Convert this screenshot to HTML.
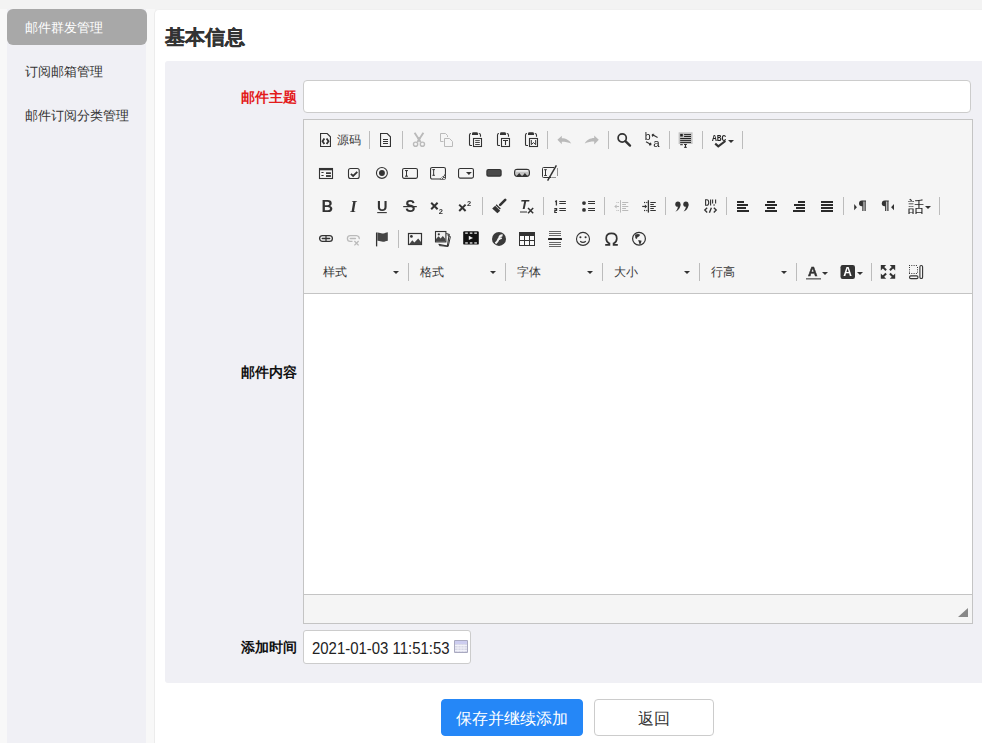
<!DOCTYPE html>
<html><head><meta charset="utf-8">
<style>
*{box-sizing:border-box}
html,body{margin:0;padding:0;width:982px;height:743px;overflow:hidden;background:#f3f3f3;font-family:"Liberation Sans",sans-serif}
.abs{position:absolute}
#leftstrip{position:absolute;left:0;top:9px;width:155px;height:734px;background:#f8f8f8}
#side{position:absolute;left:7px;top:9px;width:139px;height:734px;background:#f0f0f5}
#pill{position:absolute;left:7px;top:9px;width:140px;height:36px;background:#a8a8a8;border-radius:6px}
.nav{position:absolute;left:25px;font-size:13px;line-height:18px;color:#333;white-space:nowrap}
#main{position:absolute;left:154px;top:9px;width:840px;height:740px;background:#fff;border-radius:5px 0 0 0;border-left:1px solid #ececec;border-top:1px solid #f0f0f0}
#title{position:absolute;left:165px;top:25px;font-size:20px;font-weight:bold;color:#333;-webkit-text-stroke:0.35px #333;line-height:24px;white-space:nowrap}
#form{position:absolute;left:165px;top:61px;width:830px;height:622px;background:#f0f0f5;border-radius:3px}
.label{position:absolute;width:120px;left:177px;text-align:right;font-size:14px;font-weight:bold;line-height:20px;color:#111;white-space:nowrap}
#subject{position:absolute;left:303px;top:80px;width:668px;height:33px;background:#fff;border:1px solid #ccc;border-radius:4px}
#cke{position:absolute;left:303px;top:119px;width:670px;height:505px;border:1px solid #c4c4c4;background:#fff}
#ctop{position:absolute;left:0;top:0;width:668px;height:174px;background:#f5f5f5;border-bottom:1px solid #c4c4c4}
#cbot{position:absolute;left:0;top:474px;width:668px;height:29px;background:#f5f5f5;border-top:1px solid #c4c4c4}
#resz{position:absolute;left:654px;top:13px;width:0;height:0;border-style:solid;border-width:0 0 9px 10px;border-color:transparent transparent #888 transparent}
.ic{position:absolute;overflow:visible;will-change:transform}
.sep{position:absolute;width:1px;height:18px;background:#bcbcbc}
.arr{position:absolute;width:0;height:0;border-left:3px solid transparent;border-right:3px solid transparent;border-top:3px solid #333}
.lbl{position:absolute;font-size:12px;line-height:17px;color:#3c3c3c;white-space:nowrap}
.ctext{position:absolute;font-size:12px;line-height:26px;color:#383838;white-space:nowrap}
#date{position:absolute;left:303px;top:630px;width:168px;height:34px;background:#fff;border:1px solid #ccc;border-radius:3px}
#datetxt{position:absolute;left:312px;top:638px;font-size:16.5px;line-height:20px;color:#222;white-space:nowrap;transform:scaleX(0.905);transform-origin:0 0}
.btn{position:absolute;top:699px;height:37px;border-radius:4px;font-size:16px;line-height:37px;text-align:center;white-space:nowrap}
</style></head><body>
<div id="leftstrip"></div>
<div id="side"></div>
<div id="pill"></div>
<div class="nav" style="top:19px;color:#fff">邮件群发管理</div>
<div class="nav" style="top:63px">订阅邮箱管理</div>
<div class="nav" style="top:107px">邮件订阅分类管理</div>
<div id="main"></div>
<div id="title">基本信息</div>
<div id="form"></div>
<div class="label" style="top:87px;color:#e31b1b">邮件主题</div>
<div id="subject"></div>
<div class="label" style="top:362px">邮件内容</div>
<div id="cke"><div id="ctop"></div><div id="cbot"><div id="resz"></div></div></div>
<svg class="ic" style="left:318px;top:132px;width:16px;height:16px" viewBox="0 0 16 16" ><path d="M2.55,1.55 H9.2 L12.45,4.8 V14.45 H2.55 Z" stroke="#333" fill="none" stroke-width="1.1"/><path d="M6.4,6.6 L4.5,9.3 L6.4,12 M8.6,6.6 L10.5,9.3 L8.6,12" stroke="#333" fill="none" stroke-width="1.8"/></svg>
<span class="lbl" style="left:337px;top:132px">源码</span>
<i class="sep" style="left:369px;top:131px"></i>
<svg class="ic" style="left:378px;top:132px;width:16px;height:16px" viewBox="0 0 16 16" ><path d="M2.55,1.55 H9.2 L12.45,4.8 V14.45 H2.55 Z" stroke="#333" fill="none" stroke-width="1.1"/><path d="M5,7.5 H10 M5,9.5 H10 M5,11.5 H10" stroke="#333" fill="none" stroke-width="1"/></svg>
<i class="sep" style="left:402px;top:131px"></i>
<svg class="ic" style="left:411px;top:132px;width:16px;height:16px;opacity:0.3" viewBox="0 0 16 16" ><path d="M3.6,0.8 L9.6,10 M12.4,0.8 L6.4,10" stroke="#333" fill="none" stroke-width="1.9"/><circle cx="4.6" cy="12.2" r="2.1" stroke="#333" fill="none" stroke-width="1.4"/><circle cx="11.4" cy="12.2" r="2.1" stroke="#333" fill="none" stroke-width="1.4"/><circle cx="8" cy="6.6" r="1.5" fill="#333"/></svg>
<svg class="ic" style="left:439px;top:132px;width:16px;height:16px;opacity:0.3" viewBox="0 0 16 16" ><path d="M4.5,9.5 H1.5 V1.5 H6.5 L8.5,3.5 V5" stroke="#333" fill="none" stroke-width="1"/><path d="M5.5,6.5 H10.5 L13.5,9.5 V14.5 H5.5 Z" stroke="#333" fill="none" stroke-width="1"/></svg>
<svg class="ic" style="left:467px;top:132px;width:16px;height:16px" viewBox="0 0 16 16" ><path d="M4,1.5 Q2.5,1.5 2.5,3 V12.5 Q2.5,13.5 3.5,13.5 H5" stroke="#333" fill="none" stroke-width="1.1"/><path d="M11.8,1.5 Q13.5,1.5 13.5,3 V4.8" stroke="#333" fill="none" stroke-width="1.1"/><path d="M5,3 V1.6 Q5,0.3 6.4,0.3 H9.6 Q11,0.3 11,1.6 V3 Z" fill="#333"/><rect x="6.5" y="6.5" width="8" height="8" fill="#f8f8f8" stroke="#333" stroke-width="1.1"/><path d="M8.2,8.6 H12.8 M8.2,10.5 H12.8 M8.2,12.5 H12.8" stroke="#333" fill="none" stroke-width="0.9"/></svg>
<svg class="ic" style="left:495px;top:132px;width:16px;height:16px" viewBox="0 0 16 16" ><path d="M4,1.5 Q2.5,1.5 2.5,3 V12.5 Q2.5,13.5 3.5,13.5 H5" stroke="#333" fill="none" stroke-width="1.1"/><path d="M11.8,1.5 Q13.5,1.5 13.5,3 V4.8" stroke="#333" fill="none" stroke-width="1.1"/><path d="M5,3 V1.6 Q5,0.3 6.4,0.3 H9.6 Q11,0.3 11,1.6 V3 Z" fill="#333"/><rect x="6.5" y="6.5" width="8" height="8" fill="#f8f8f8" stroke="#333" stroke-width="1.1"/><path d="M8,8.5 H13 M10.5,8.5 V13" stroke="#333" fill="none" stroke-width="1.1"/></svg>
<svg class="ic" style="left:523px;top:132px;width:16px;height:16px" viewBox="0 0 16 16" ><path d="M4,1.5 Q2.5,1.5 2.5,3 V12.5 Q2.5,13.5 3.5,13.5 H5" stroke="#333" fill="none" stroke-width="1.1"/><path d="M11.8,1.5 Q13.5,1.5 13.5,3 V4.8" stroke="#333" fill="none" stroke-width="1.1"/><path d="M5,3 V1.6 Q5,0.3 6.4,0.3 H9.6 Q11,0.3 11,1.6 V3 Z" fill="#333"/><rect x="6.5" y="6.5" width="8" height="8" fill="#f8f8f8" stroke="#333" stroke-width="1.1"/><path d="M8.3,8 V12.7 L10.5,10.6 L12.7,12.7 V8" stroke="#333" fill="none" stroke-width="1"/></svg>
<i class="sep" style="left:547px;top:131px"></i>
<svg class="ic" style="left:556px;top:132px;width:16px;height:16px;opacity:0.3" viewBox="0 0 16 16" ><path d="M1.4,7.8 L5.8,3.8 V6.2 C9.8,6.2 13.8,8.2 15.2,11.6 C12.2,10.2 9.2,9.8 5.8,9.8 V12.2 Z" fill="#333"/></svg>
<svg class="ic" style="left:584px;top:132px;width:16px;height:16px;opacity:0.3" viewBox="0 0 16 16" ><path d="M14.8,7.8 L10.2,3.4 V6 C6.2,6 2.2,8.2 0.8,11.4 C3.8,10 6.8,9.6 10.2,9.6 V12.4 Z" fill="#333"/></svg>
<i class="sep" style="left:608px;top:131px"></i>
<svg class="ic" style="left:617px;top:132px;width:16px;height:16px" viewBox="0 0 16 16" ><circle cx="5.2" cy="6" r="4.1" stroke="#333" fill="none" stroke-width="1.7"/><path d="M8.4,9.2 L13,13.6" stroke="#333" fill="none" stroke-width="2.4" stroke-linecap="round"/></svg>
<svg class="ic" style="left:645px;top:132px;width:16px;height:16px" viewBox="0 0 16 16" ><text x="-0.3" y="8.4" font-family="Liberation Sans" font-size="10.5" fill="#222">b</text><text x="8.2" y="15.2" font-family="Liberation Sans" font-size="11.5" fill="#222">a</text><path d="M7.2,2.6 L12.6,5.6 M7,2.5 L9.2,2.3 M7,2.6 L7.8,4.6" stroke="#333" fill="none" stroke-width="1.1"/><path d="M1,9.8 L6,12.6 M6.2,12.6 L4,12.9 M6.2,12.6 L5.4,10.8" stroke="#333" fill="none" stroke-width="1.1"/></svg>
<i class="sep" style="left:669px;top:131px"></i>
<svg class="ic" style="left:678px;top:132px;width:16px;height:16px" viewBox="0 0 16 16" ><rect x="0.6" y="0.3" width="14" height="11.7" fill="#c4c4c4"/><rect x="2.2" y="1.9" width="2.6" height="2.6" fill="#222"/><path d="M6.1,2.6 H13 M6.1,4.5 H13 M2.2,6.5 H13 M2.2,8.4 H13 M2.2,10.4 H13 M2.2,12.7 H4.8" stroke="#222" stroke-width="1"/><path d="M6.1,12.5 H8.8 M7.45,12.5 V15.3 M6.1,15.3 H8.8" stroke="#222" stroke-width="1"/></svg>
<i class="sep" style="left:702px;top:131px"></i>
<svg class="ic" style="left:711px;top:132px;width:16px;height:16px" viewBox="0 0 16 16" ><text x="0.9" y="8.6" font-family="Liberation Mono" font-weight="bold" font-size="9" textLength="14.3" lengthAdjust="spacingAndGlyphs" fill="#222">ABC</text><path d="M4.2,11.6 L7.3,14.4 L14.4,9" stroke="#333" fill="none" stroke-width="2.1"/></svg>
<i class="arr" style="left:728px;top:140px"></i>
<i class="sep" style="left:742px;top:131px"></i>
<svg class="ic" style="left:318px;top:165px;width:16px;height:16px" viewBox="0 0 16 16" ><rect x="1.5" y="3.5" width="13" height="10" stroke="#333" fill="none" stroke-width="1.1"/><rect x="1" y="3" width="14" height="2.3" fill="#333"/><path d="M3.4,7.5 H5.6 M3.4,10.5 H5.6" stroke="#333" fill="none" stroke-width="1"/><rect x="8" y="7.3" width="4.9" height="1.7" fill="#333"/><rect x="8" y="10.1" width="4.9" height="1.8" fill="#333"/></svg>
<svg class="ic" style="left:346px;top:165px;width:16px;height:16px" viewBox="0 0 16 16" ><rect x="2.5" y="3.5" width="10.7" height="10" rx="2" stroke="#333" fill="none" stroke-width="1.1"/><path d="M4.9,8.9 L7.1,11 L11.3,6.8" stroke="#333" fill="none" stroke-width="1.8"/></svg>
<svg class="ic" style="left:374px;top:165px;width:16px;height:16px" viewBox="0 0 16 16" ><circle cx="7.9" cy="7.9" r="5.45" stroke="#333" fill="none" stroke-width="1.1"/><circle cx="7.95" cy="7.95" r="2.95" fill="#333"/></svg>
<svg class="ic" style="left:402px;top:165px;width:16px;height:16px" viewBox="0 0 16 16" ><rect x="0.55" y="3.5" width="14.9" height="9.9" rx="1.6" stroke="#333" fill="none" stroke-width="1.1"/><path d="M3,5.6 H6 M4.5,5.6 V11.2 M3,11.2 H6" stroke="#333" fill="none" stroke-width="1"/></svg>
<svg class="ic" style="left:430px;top:165px;width:16px;height:16px" viewBox="0 0 16 16" ><rect x="0.55" y="2.45" width="14.9" height="11.6" rx="1.6" stroke="#333" fill="none" stroke-width="1.1"/><path d="M2.4,4.6 H4.9 M3.65,4.6 V10.3 M2.4,10.3 H4.9" stroke="#333" fill="none" stroke-width="1"/><path d="M9.6,14.4 L15.4,8.6 V14.4 Z" fill="#555"/><path d="M11,13.5 h1 M13,13.5 h1 M12,12.5 h1 M14,11.5 h1 M13,11.5 h0 M14,13.5 h1 M13,10.5 h1" stroke="#eee" stroke-width="0.9"/></svg>
<svg class="ic" style="left:458px;top:165px;width:16px;height:16px" viewBox="0 0 16 16" ><rect x="0.55" y="3.45" width="14.9" height="9.7" rx="1.6" stroke="#333" fill="none" stroke-width="1.1"/><path d="M8,7 H13.8 L10.9,10.1 Z" fill="#333"/></svg>
<svg class="ic" style="left:486px;top:165px;width:16px;height:16px" viewBox="0 0 16 16" ><rect x="0.3" y="3.9" width="15.4" height="7.8" rx="2" fill="#333"/><rect x="1.5" y="5" width="13" height="5.6" rx="1" fill="#4a4a4a"/></svg>
<svg class="ic" style="left:514px;top:165px;width:16px;height:16px" viewBox="0 0 16 16" ><rect x="0.55" y="4.4" width="14.9" height="7" rx="2.8" fill="#c4c4c4" stroke="#333" stroke-width="1.1"/><rect x="1.6" y="5.3" width="12.8" height="1.2" fill="#fff"/><path d="M1.2,10.9 L2.6,10.9 L5.2,8 L7.8,10.9 L8.4,10.9 L10.9,8 L13.4,10.9 L14.8,10.9 V11 H1.2 Z" fill="#333"/></svg>
<svg class="ic" style="left:542px;top:165px;width:16px;height:16px" viewBox="0 0 16 16" ><path d="M9.4,12.5 H1.5 Q0.5,12.5 0.5,11.5 V3.5 Q0.5,2.5 1.5,2.5 H12" stroke="#333" fill="none" stroke-width="1"/><path d="M2.2,4.7 H4.8 M3.5,4.7 V10.5 M2.2,10.5 H4.8" stroke="#333" fill="none" stroke-width="1"/><path d="M14.4,0.3 L5.6,15.6" stroke="#333" fill="none" stroke-width="1.5"/><path d="M15.5,3.5 V11.5 M10.5,12.5 H14.5" stroke="#333" stroke-width="1" stroke-dasharray="1 1"/></svg>
<svg class="ic" style="left:318px;top:198px;width:16px;height:16px" viewBox="0 0 16 16" ><text x="3.4" y="14" font-family="Liberation Sans" font-weight="bold" font-style="normal" font-size="16" fill="#333" >B</text></svg>
<svg class="ic" style="left:346px;top:198px;width:16px;height:16px" viewBox="0 0 16 16" ><text x="4.2" y="14" font-family="Liberation Serif" font-weight="bold" font-style="italic" font-size="16.5" fill="#333" >I</text></svg>
<svg class="ic" style="left:374px;top:198px;width:16px;height:16px" viewBox="0 0 16 16" ><text x="3" y="12.6" font-family="Liberation Sans" font-weight="bold" font-style="normal" font-size="14.5" fill="#333" >U</text><path d="M3.2,14.6 H12.8" stroke="#333" fill="none" stroke-width="1.1"/></svg>
<svg class="ic" style="left:402px;top:198px;width:16px;height:16px" viewBox="0 0 16 16" ><text x="3.6" y="14" font-family="Liberation Sans" font-weight="bold" font-style="normal" font-size="16.5" fill="#333" transform="scale(0.92,1)">S</text><path d="M1.2,8.6 H14.8" stroke="#333" fill="none" stroke-width="1.2"/></svg>
<svg class="ic" style="left:430px;top:198px;width:16px;height:16px" viewBox="0 0 16 16" ><path d="M1.2,4.8 L7.6,11.2 M7.6,4.8 L1.2,11.2" stroke="#333" fill="none" stroke-width="2"/><text x="8.8" y="15.6" font-family="Liberation Sans" font-weight="bold" font-style="normal" font-size="7.5" fill="#333" >2</text></svg>
<svg class="ic" style="left:458px;top:198px;width:16px;height:16px" viewBox="0 0 16 16" ><path d="M1.2,6.6 L7.6,13 M7.6,6.6 L1.2,13" stroke="#333" fill="none" stroke-width="2"/><text x="9" y="7.6" font-family="Liberation Sans" font-weight="bold" font-style="normal" font-size="7.5" fill="#333" >2</text></svg>
<i class="sep" style="left:482px;top:197px"></i>
<svg class="ic" style="left:491px;top:198px;width:16px;height:16px" viewBox="0 0 16 16" ><path d="M14.2,1.8 L9.2,6.8" stroke="#333" fill="none" stroke-width="2.6" stroke-linecap="round"/><path d="M5.6,6.2 L9.8,10.4 L8.8,11.4 L4.6,7.2 Z" fill="#333"/><path d="M4.2,7.8 L9.2,12.8 L6.4,15.2 L1.2,10.4 Z" fill="#333"/></svg>
<svg class="ic" style="left:519px;top:198px;width:16px;height:16px" viewBox="0 0 16 16" ><text x="1.2" y="11.4" font-family="Liberation Sans" font-weight="bold" font-style="italic" font-size="13.5" fill="#333" >T</text><path d="M1,14 H8" stroke="#333" fill="none" stroke-width="1"/><path d="M9,10 L14.2,15.2 M14.2,10 L9,15.2" stroke="#333" fill="none" stroke-width="1.5"/></svg>
<i class="sep" style="left:543px;top:197px"></i>
<svg class="ic" style="left:552px;top:198px;width:16px;height:16px" viewBox="0 0 16 16" ><path d="M3.1,3.6 L4.4,3 V7.6" stroke="#333" fill="none" stroke-width="1.3"/><path d="M2.3,10.6 H4.6 V12.3 H2.8 V14.5 H5" stroke="#333" fill="none" stroke-width="1.2"/><path d="M7.3,3.5 H13.9 M7.3,5.5 H13.9 M7.3,10.5 H13.9 M7.3,12.5 H13.9" stroke="#333" fill="none" stroke-width="1"/></svg>
<svg class="ic" style="left:580px;top:198px;width:16px;height:16px" viewBox="0 0 16 16" ><circle cx="4" cy="5.1" r="1.9" fill="#333"/><circle cx="4" cy="11.9" r="1.9" fill="#333"/><path d="M8.1,3.5 H15 M8.1,5.5 H15 M8.1,10.5 H15 M8.1,12.5 H15" stroke="#333" fill="none" stroke-width="1"/></svg>
<i class="sep" style="left:604px;top:197px"></i>
<svg class="ic" style="left:613px;top:198px;width:16px;height:16px;opacity:0.3" viewBox="0 0 16 16" ><path d="M7.5,2.2 V14.6" stroke="#333" fill="none" stroke-width="1"/><path d="M9.2,4.5 H15.3 M9.2,6.5 H13 M9.2,8.5 H15.3 M9.2,10.5 H13 M9.2,12.5 H15.3" stroke="#333" fill="none" stroke-width="1"/><path d="M1.2,8.4 L3.6,6.4 V10.4 Z" fill="#333"/><path d="M3.4,8.5 H6 M3.4,4.5 H4.4 M5.2,4.5 H6 M3.4,12.5 H4.4 M5.2,12.5 H6" stroke="#333" fill="none" stroke-width="1"/></svg>
<svg class="ic" style="left:641px;top:198px;width:16px;height:16px" viewBox="0 0 16 16" ><path d="M7.4,2.2 V14.6" stroke="#333" fill="none" stroke-width="1.3"/><path d="M9.3,4.5 H14.8 M9.3,6.5 H12.8 M9.3,8.5 H14.8 M9.3,10.5 H12.8 M9.3,12.5 H14.8" stroke="#333" fill="none" stroke-width="1.1"/><path d="M6.2,8.45 L3.9,6.5 V10.4 Z" fill="#333"/><path d="M1.2,8.45 H4.4" stroke="#333" fill="none" stroke-width="1.2"/><rect x="3" y="3.9" width="1.2" height="1.2" fill="#333"/><rect x="5.2" y="3.9" width="1.2" height="1.2" fill="#333"/><rect x="3" y="11.9" width="1.2" height="1.2" fill="#333"/><rect x="5.2" y="11.9" width="1.2" height="1.2" fill="#333"/></svg>
<i class="sep" style="left:665px;top:197px"></i>
<svg class="ic" style="left:674px;top:198px;width:16px;height:16px" viewBox="0 0 16 16" ><circle cx="3.9" cy="6.2" r="2.6" fill="#333"/><path d="M6.5,6.3 C6.6,9.8 4.6,12.6 1.4,13.8 C3,12 3.8,10.5 3.9,8.6 Z" fill="#333"/><circle cx="11.9" cy="6.2" r="2.6" fill="#333"/><path d="M14.5,6.3 C14.6,9.8 12.6,12.6 9.6,13.6 C11,12 11.8,10.5 11.9,8.6 Z" fill="#333"/></svg>
<svg class="ic" style="left:702px;top:198px;width:16px;height:16px" viewBox="0 0 16 16" ><path d="M3.6,1.7 H4.9 Q6.7,1.7 6.7,4.5 Q6.7,7.3 4.9,7.3 H3.6 Z" stroke="#333" fill="none" stroke-width="1.1"/><path d="M8.6,1.6 V7.4 M10.6,1.6 V5.6 M13.6,1.6 V5.6" stroke="#333" fill="none" stroke-width="1.1"/><rect x="11.4" y="6.4" width="1.4" height="1.2" fill="#333"/><path d="M5.2,9.8 L2.8,12.1 L5.2,14.4 M11.8,9.8 L14.2,12.1 L11.8,14.4 M9.4,9.8 L7.4,14.8" stroke="#333" fill="none" stroke-width="1.35"/></svg>
<i class="sep" style="left:726px;top:197px"></i>
<svg class="ic" style="left:735px;top:198px;width:16px;height:16px" viewBox="0 0 16 16" ><rect x="2" y="3" width="7" height="2" fill="#2a2a2a"/><rect x="2" y="6" width="11" height="2" fill="#2a2a2a"/><rect x="2" y="9" width="9" height="2" fill="#2a2a2a"/><rect x="2" y="12" width="12" height="2" fill="#2a2a2a"/></svg>
<svg class="ic" style="left:763px;top:198px;width:16px;height:16px" viewBox="0 0 16 16" ><rect x="4" y="3" width="8" height="2" fill="#2a2a2a"/><rect x="2" y="6" width="12" height="2" fill="#2a2a2a"/><rect x="4" y="9" width="8" height="2" fill="#2a2a2a"/><rect x="2" y="12" width="12" height="2" fill="#2a2a2a"/></svg>
<svg class="ic" style="left:791px;top:198px;width:16px;height:16px" viewBox="0 0 16 16" ><rect x="7" y="3" width="7" height="2" fill="#2a2a2a"/><rect x="3" y="6" width="11" height="2" fill="#2a2a2a"/><rect x="5" y="9" width="9" height="2" fill="#2a2a2a"/><rect x="2" y="12" width="12" height="2" fill="#2a2a2a"/></svg>
<svg class="ic" style="left:819px;top:198px;width:16px;height:16px" viewBox="0 0 16 16" ><rect x="2" y="3" width="12" height="2" fill="#2a2a2a"/><rect x="2" y="6" width="12" height="2" fill="#2a2a2a"/><rect x="2" y="9" width="12" height="2" fill="#2a2a2a"/><rect x="2" y="12" width="12" height="2" fill="#2a2a2a"/></svg>
<i class="sep" style="left:843px;top:197px"></i>
<svg class="ic" style="left:852px;top:198px;width:16px;height:16px" viewBox="0 0 16 16" ><path d="M2.2,6.1 L4.9,9.2 L2.2,12.2 Z" fill="#333"/><path d="M10.6,3 H14 M10.9,3.2 V12.9 M13.1,3.2 V12.9" stroke="#333" fill="none" stroke-width="1.2"/><path d="M10.9,2.6 H9.8 Q7,2.8 7,5.5 Q7,8.2 9.8,8.3 H10.9 Z" fill="#333"/></svg>
<svg class="ic" style="left:880px;top:198px;width:16px;height:16px" viewBox="0 0 16 16" ><path d="M5.4,3 H8.8 M5.7,3.2 V12.9 M7.8999999999999995,3.2 V12.9" stroke="#333" fill="none" stroke-width="1.2"/><path d="M5.7,2.6 H4.6 Q1.8,2.8 1.8,5.5 Q1.8,8.2 4.6,8.3 H5.7 Z" fill="#333"/><path d="M14,6.1 L11.1,9.2 L14,12.2 Z" fill="#333"/></svg>
<svg class="ic" style="left:908px;top:198px;width:16px;height:16px" viewBox="0 0 16 16" ><text x="-0.5" y="14.2" font-size="15.5" fill="#222" font-family="Liberation Sans">話</text></svg>
<i class="arr" style="left:925px;top:206px"></i>
<i class="sep" style="left:939px;top:197px"></i>
<svg class="ic" style="left:318px;top:231px;width:16px;height:16px" viewBox="0 0 16 16" ><rect x="1.6" y="4.6" width="12.8" height="5.8" rx="2.9" stroke="#333" fill="none" stroke-width="1.3"/><rect x="3.6" y="6.8" width="8.8" height="1.4" rx="0.7" fill="#333"/><rect x="7.4" y="4.6" width="1.2" height="5.8" fill="#333"/></svg>
<svg class="ic" style="left:346px;top:231px;width:16px;height:16px;opacity:0.3" viewBox="0 0 16 16" ><path d="M6.5,10.4 H4.3 A2.9,2.9 0 0 1 4.3,4.6 H10.5 A2.9,2.9 0 0 1 13.2,8.2" stroke="#333" fill="none" stroke-width="1.3"/><rect x="3.6" y="6.8" width="6.5" height="1.4" rx="0.7" fill="#333"/><path d="M8.4,10 L12.6,14.4 M12.6,10 L8.4,14.4" stroke="#333" fill="none" stroke-width="1.3"/></svg>
<svg class="ic" style="left:374px;top:231px;width:16px;height:16px" viewBox="0 0 16 16" ><path d="M2.6,1.5 V15.4" stroke="#333" fill="none" stroke-width="1.3"/><path d="M3.4,1.6 C5.6,1.4 6.6,2.8 9.2,2.5 C11.2,2.2 12.2,1.5 13.8,1.3 V9.8 C12,10.1 11,10.8 9,10.8 C7,10.8 5.5,9.6 3.4,9.8 Z" fill="#444"/></svg>
<i class="sep" style="left:398px;top:230px"></i>
<svg class="ic" style="left:407px;top:231px;width:16px;height:16px" viewBox="0 0 16 16" ><rect x="1.5" y="2.5" width="13" height="11" stroke="#333" fill="none" stroke-width="1.2"/><circle cx="4.4" cy="5.4" r="1.4" fill="#333"/><path d="M2,13.5 L5.3,9.2 L7.4,11.4 L11.2,7.4 L14,11 V13.5 Z" fill="#444"/></svg>
<svg class="ic" style="left:435px;top:231px;width:16px;height:16px" viewBox="0 0 16 16" ><path d="M11.2,2.4 L14.2,3.4 L12.4,15 L3.6,13.4" stroke="#333" fill="none" stroke-width="1.1"/><path d="M12.6,4.4 L15.4,5.6 L13.2,15.4 L4.2,14.6" stroke="#333" fill="none" stroke-width="1"/><rect x="0.5" y="0.5" width="10.4" height="10.4" fill="#eee" stroke="#333" stroke-width="1.1"/><circle cx="3.8" cy="3.3" r="1.1" fill="#333"/><path d="M1,10.5 V8 L3.6,5.2 L5.6,7.4 L7.8,5 L10.4,8 V10.5 Z" fill="#444"/></svg>
<svg class="ic" style="left:463px;top:231px;width:16px;height:16px" viewBox="0 0 16 16" ><rect x="0.2" y="0.2" width="15.6" height="13.4" rx="1.2" fill="#111"/><rect x="2.2" y="1.4" width="2.6" height="1.5" fill="#ccc"/><rect x="2.2" y="11.2" width="2.6" height="1.5" fill="#ccc"/><rect x="6.8" y="1.4" width="2.6" height="1.5" fill="#ccc"/><rect x="6.8" y="11.2" width="2.6" height="1.5" fill="#ccc"/><rect x="11.3" y="1.4" width="2.6" height="1.5" fill="#ccc"/><rect x="11.3" y="11.2" width="2.6" height="1.5" fill="#ccc"/><path d="M5.8,4.8 L10,6.9 L5.8,9 Z" fill="#eee"/></svg>
<svg class="ic" style="left:491px;top:231px;width:16px;height:16px" viewBox="0 0 16 16" ><circle cx="8" cy="7.9" r="7" fill="#3a3a3a"/><path d="M4.4,12.4 C6,11.2 7.2,9.2 8.2,6.8 C8.8,5.2 10,4.2 11.6,4.4" fill="none" stroke="#f2f2f2" stroke-width="2.1"/><path d="M7.2,8.6 L10.8,7" stroke="#f2f2f2" stroke-width="1.4"/></svg>
<svg class="ic" style="left:519px;top:231px;width:16px;height:16px" viewBox="0 0 16 16" ><rect x="0" y="1" width="16" height="14" fill="#333"/><rect x="1" y="5" width="4" height="4" fill="#fafafa"/><rect x="1" y="10" width="4" height="4" fill="#fafafa"/><rect x="6" y="5" width="4" height="4" fill="#fafafa"/><rect x="6" y="10" width="4" height="4" fill="#fafafa"/><rect x="11" y="5" width="4" height="4" fill="#fafafa"/><rect x="11" y="10" width="4" height="4" fill="#fafafa"/></svg>
<svg class="ic" style="left:547px;top:231px;width:16px;height:16px" viewBox="0 0 16 16" ><path d="M2,0.5 H14 M2,2.5 H14 M2,4.5 H14 M2,11.5 H14 M2,13.5 H14 M2,15.5 H14" stroke="#666" stroke-width="1"/><rect x="1" y="7" width="14" height="2" rx="0.6" fill="#222"/></svg>
<svg class="ic" style="left:575px;top:231px;width:16px;height:16px" viewBox="0 0 16 16" ><circle cx="8" cy="7.9" r="6.5" stroke="#333" fill="none" stroke-width="1.1"/><circle cx="5.4" cy="6.3" r="1.05" fill="#333"/><circle cx="10.6" cy="6.3" r="1.05" fill="#333"/><path d="M5.2,10.2 Q8,12.6 10.8,10.2" stroke="#333" fill="none" stroke-width="1.2"/></svg>
<svg class="ic" style="left:603px;top:231px;width:16px;height:16px" viewBox="0 0 16 16" ><path d="M2.2,13.8 H6.4 V12.4 C4,11.2 3.2,9.2 3.2,7.4 C3.2,4.2 5.4,2.4 8.5,2.4 C11.6,2.4 13.8,4.2 13.8,7.4 C13.8,9.2 13,11.2 10.6,12.4 V13.8 H14.8" fill="none" stroke="#333" stroke-width="1.7"/></svg>
<svg class="ic" style="left:631px;top:231px;width:16px;height:16px" viewBox="0 0 16 16" ><circle cx="8" cy="7.7" r="6.4" stroke="#333" fill="none" stroke-width="1.2"/><path d="M4,3.6 L7.2,3 L9.2,3.8 L8,5.4 L6.6,6 L5.8,8 L4.4,7.2 Z M7.2,9 L10.6,9.8 L9.8,12.4 L8.6,13.6 Z" fill="#333"/></svg>
<span class="ctext" style="left:323px;top:259px">样式</span>
<i class="arr" style="left:393px;top:271px"></i>
<i class="sep" style="left:408px;top:263px"></i>
<span class="ctext" style="left:420px;top:259px">格式</span>
<i class="arr" style="left:490px;top:271px"></i>
<i class="sep" style="left:505px;top:263px"></i>
<span class="ctext" style="left:517px;top:259px">字体</span>
<i class="arr" style="left:587px;top:271px"></i>
<i class="sep" style="left:602px;top:263px"></i>
<span class="ctext" style="left:614px;top:259px">大小</span>
<i class="arr" style="left:684px;top:271px"></i>
<i class="sep" style="left:699px;top:263px"></i>
<span class="ctext" style="left:711px;top:259px">行高</span>
<i class="arr" style="left:781px;top:271px"></i>
<i class="sep" style="left:796px;top:263px"></i>
<svg class="ic" style="left:805px;top:264px;width:16px;height:16px" viewBox="0 0 16 16" ><text x="3" y="12" font-family="Liberation Sans" font-weight="bold" font-style="normal" font-size="13" fill="#333" stroke="#333" stroke-width="0.5">A</text><rect x="1" y="14" width="15" height="1.6" fill="#777"/></svg>
<i class="arr" style="left:822px;top:272px"></i>
<svg class="ic" style="left:840px;top:264px;width:16px;height:16px" viewBox="0 0 16 16" ><rect x="0.5" y="1" width="14.5" height="14" rx="2.2" fill="#333"/><text x="3.2" y="12.4" font-family="Liberation Sans" font-weight="bold" font-size="12" fill="#fff">A</text></svg>
<i class="arr" style="left:857px;top:272px"></i>
<i class="sep" style="left:871px;top:263px"></i>
<svg class="ic" style="left:880px;top:264px;width:16px;height:16px" viewBox="0 0 16 16" ><path d="M0.8,1 h5.4 L0.8,6.4 Z" fill="#333"/><path d="M2.8,3 L6.1,6.3" stroke="#333" stroke-width="2"/><path d="M15.2,1 h-5.4 L15.2,6.4 Z" fill="#333"/><path d="M13.2,3 L9.899999999999999,6.3" stroke="#333" stroke-width="2"/><path d="M0.8,14.8 h5.4 L0.8,9.4 Z" fill="#333"/><path d="M2.8,12.8 L6.1,9.5" stroke="#333" stroke-width="2"/><path d="M15.2,14.8 h-5.4 L15.2,9.4 Z" fill="#333"/><path d="M13.2,12.8 L9.899999999999999,9.5" stroke="#333" stroke-width="2"/></svg>
<svg class="ic" style="left:908px;top:264px;width:16px;height:16px" viewBox="0 0 16 16" ><path d="M1,1.5 H10 M1,9.5 H10" stroke="#333" stroke-width="1" stroke-dasharray="1 1.3"/><path d="M1.5,3 V9 M9.5,3 V9" stroke="#333" stroke-width="1" stroke-dasharray="1 1.3"/><rect x="11.9" y="1.5" width="2.7" height="13" rx="1.3" stroke="#333" fill="none" stroke-width="1.1"/><rect x="1.5" y="11.9" width="8.5" height="2.7" rx="1.3" stroke="#333" fill="none" stroke-width="1.1"/></svg>
<div class="label" style="top:637px">添加时间</div>
<div id="date"></div>
<div id="datetxt">2021-01-03 11:51:53</div>
<svg class="ic" style="left:454px;top:640px;width:14px;height:13px" viewBox="0 0 14 13">
<rect x="0" y="0" width="14" height="13" rx="1" fill="#a9a9c0"/>
<rect x="1" y="1" width="12" height="3" fill="#cdcdf0"/>
<rect x="1" y="4" width="12" height="8" fill="#d7d7e6"/>
<path d="M1,5.5 H13 M1,8 H13 M1,10.5 H13" stroke="#f4f4fb" stroke-width="0.9"/>
<path d="M4,4.5 V12 M7,4.5 V12 M10,4.5 V12" stroke="#f4f4fb" stroke-width="0.7"/>
</svg>
<div class="btn" style="left:441px;width:142px;background:#2587f7;color:#fff;border:1px solid #2587f7">保存并继续添加</div>
<div class="btn" style="left:594px;width:120px;background:#fff;color:#333;border:1px solid #ccc">返回</div>
</body></html>
